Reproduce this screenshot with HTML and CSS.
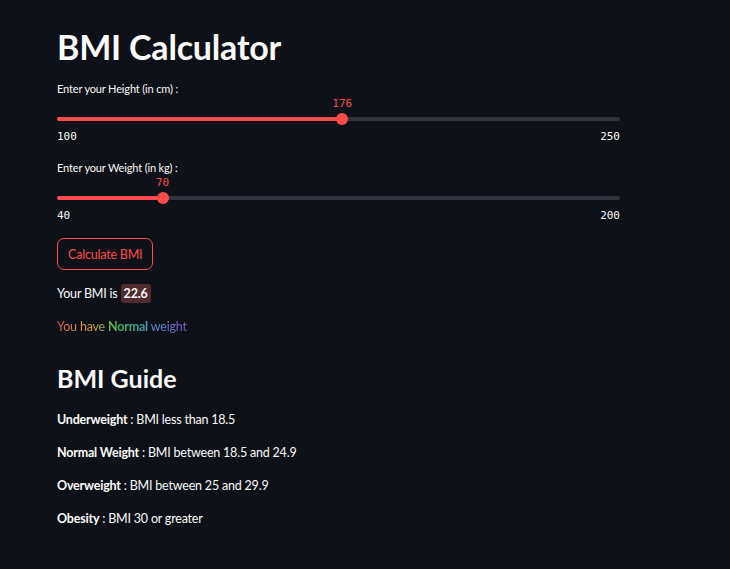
FILE: index.html
```html
<!DOCTYPE html>
<html>
<head>
<meta charset="utf-8">
<link rel="stylesheet" href="styles.css">
</head>
<body>
<main class="main">
  <h1 class="title">BMI Calculator</h1>

  <div class="slider">
    <div class="slider-label">Enter your Height (in cm) :</div>
    <div class="slider-area">
      <div class="track">
        <div class="fill" style="width:50.67%"></div>
        <div class="thumb" style="left:50.67%"><span class="thumb-value">176</span></div>
      </div>
    </div>
    <div class="ticks"><span>100</span><span>250</span></div>
  </div>

  <div class="slider">
    <div class="slider-label">Enter your Weight (in kg) :</div>
    <div class="slider-area">
      <div class="track">
        <div class="fill" style="width:18.75%"></div>
        <div class="thumb" style="left:18.75%"><span class="thumb-value">70</span></div>
      </div>
    </div>
    <div class="ticks"><span>40</span><span>200</span></div>
  </div>

  <button class="btn">Calculate BMI</button>

  <p class="text">Your BMI is <span class="badge">22.6</span></p>

  <p class="text rainbow">You have <strong>Normal</strong> weight</p>

  <h2 class="subtitle">BMI Guide</h2>
  <p class="text"><strong>Underweight</strong> : BMI less than 18.5</p>
  <p class="text"><strong>Normal Weight</strong> : BMI between 18.5 and 24.9</p>
  <p class="text"><strong>Overweight</strong> : BMI between 25 and 29.9</p>
  <p class="text"><strong>Obesity</strong> : BMI 30 or greater</p>
</main>
</body>
</html>
```
FILE: styles.css
```css
html, body {
  margin: 0;
  padding: 0;
  background: #0e1117;
  color: #fafafa;
  font-family: "Lato", "Noto Sans", sans-serif;
}
.main {
  width: 563px;
  padding: 24px 0 0 57px;
}
.title {
  margin: 0;
  font-size: 34px;
  font-weight: 700;
  line-height: 46px;
  letter-spacing: -0.2px;
}
.slider {
  margin-top: 12px;
}
.slider + .slider {
  margin-top: 16px;
}
.slider-label {
  font-size: 11px;
  line-height: 14px;
  letter-spacing: -0.15px;
  color: #fafafa;
}
.slider-area {
  height: 28px;
  display: flex;
  align-items: flex-end;
  padding-bottom: 3px;
  box-sizing: border-box;
}
.track {
  position: relative;
  width: 100%;
  height: 4px;
  border-radius: 2px;
  background: #31333f;
}
.fill {
  height: 100%;
  border-radius: 2px;
  background: #ff4b4b;
}
.thumb {
  position: absolute;
  top: 50%;
  width: 12px;
  height: 12px;
  margin: -6px 0 0 -6px;
  border-radius: 50%;
  background: #ff4b4b;
}
.thumb-value {
  position: absolute;
  bottom: 15px;
  left: 50%;
  transform: translateX(-50%);
  font-family: "DejaVu Sans Mono", monospace;
  font-size: 11px;
  color: #ff4b4b;
  white-space: nowrap;
}
.ticks {
  display: flex;
  justify-content: space-between;
  font-family: "DejaVu Sans Mono", monospace;
  font-size: 11px;
  line-height: 16px;
  color: #fafafa;
  margin-top: 5px;
}
.btn {
  margin-top: 14px;
  display: block;
  height: 32px;
  padding: 0 10px;
  border: 1px solid #ff4b4b;
  border-radius: 7px;
  background: transparent;
  color: #ff4b4b;
  font-family: inherit;
  font-size: 12.5px;
  letter-spacing: -0.2px;
}
.text {
  margin: 0;
  font-size: 12.5px;
  line-height: 20px;
  letter-spacing: -0.2px;
}
.btn + .text {
  margin-top: 14px;
}
.badge {
  display: inline-block;
  padding: 0 3px;
  border-radius: 3px;
  background: #4f2c2f;
  font-weight: 700;
  line-height: 19px;
}
.rainbow {
  margin-top: 12px;
  display: inline-block;
  background: linear-gradient(to right, #ff6f5e, #ffbd45, #3dd56d, #5fa8f0, #9a5cf5);
  -webkit-background-clip: text;
  background-clip: text;
  color: transparent;
  opacity: 0.85;
}
.subtitle {
  margin: 23px 0 0;
  font-size: 25px;
  line-height: 36px;
  font-weight: 700;
}
.subtitle + .text {
  margin-top: 14px;
}
.text + .text {
  margin-top: 13px;
}
```
